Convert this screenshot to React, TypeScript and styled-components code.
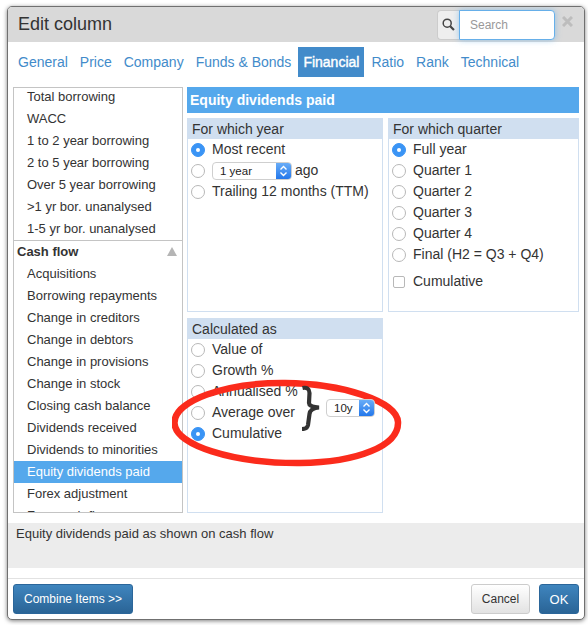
import React from 'react';
import styled, {createGlobalStyle} from 'styled-components';

const GlobalStyle = createGlobalStyle`
html, body {
    margin: 0;
    padding: 0;
    background: #ffffff;
}
body {
    font-family: "Liberation Sans", Arial, sans-serif;
    color: #333333;
}
* {
    box-sizing: border-box;
}
`;

const Page = styled.div`
width: 588px;
height: 625px;
padding: 6px 0 0 7px;
overflow: hidden;
background: #ffffff;
`;

const Modal = styled.div`
display: flex;
flex-direction: column;
width: 578px;
height: 614px;
background: #ffffff;
border: 1px solid #707070;
border-radius: 5px;
box-shadow: 0 1px 4px rgba(0, 0, 0, 0.5);
overflow: hidden;
`;

const TitleBar = styled.div`
display: flex;
align-items: center;
height: 35px;
flex: none;
padding-left: 10px;
background: #d9d9d9;
`;

const Title = styled.div`
flex: 1;
font-size: 18px;
color: #333333;
`;

const SearchAddon = styled.div`
display: flex;
align-items: center;
justify-content: center;
width: 22px;
height: 30px;
background: #eeeeee;
border: 1px solid #cccccc;
border-right: none;
border-radius: 4px 0 0 4px;
`;

const SearchInput = styled.div`
display: flex;
align-items: center;
width: 96px;
height: 30px;
padding-left: 10px;
font-size: 12px;
color: #999999;
background: #ffffff;
border: 1px solid #66afe9;
border-radius: 0 4px 4px 0;
box-shadow: 0 0 6px rgba(102, 175, 233, 0.6);
`;

const CloseIcon = styled.div`
display: flex;
width: 29px;
padding-left: 7px;
margin-top: -7px;
`;

const Tabs = styled.div`
display: flex;
align-items: center;
height: 30px;
flex: none;
margin-top: 5px;
padding-left: 5px;
`;

const Tab = styled.div<{ $active?: boolean }>`
display: flex;
align-items: center;
height: 30px;
padding: 0 5px;
margin-right: 2px;
font-size: 14px;
color: ${p => (p.$active ? '#ffffff' : '#428bca')};
-webkit-text-stroke: ${p => (p.$active ? '0.4px #ffffff' : '0')};
background: ${p => (p.$active ? '#428bca' : 'transparent')};
`;

const Body = styled.div`
display: flex;
flex: none;
gap: 4px;
height: 426px;
margin-top: 10px;
padding-left: 5px;
`;

const ListBox = styled.div`
display: flex;
flex-direction: column;
width: 170px;
height: 426px;
flex: none;
overflow: hidden;
border: 1px solid #c4c4c4;
`;

const ListItem = styled.div<{ $selected?: boolean }>`
flex: none;
height: 22px;
line-height: 22px;
padding-left: 13px;
font-size: 13px;
white-space: nowrap;
color: ${p => (p.$selected ? '#ffffff' : '#333333')};
background: ${p => (p.$selected ? '#55a8ec' : 'transparent')};

&:first-child {
    margin-top: -2px;
}
`;

const ListSection = styled.div`
display: flex;
align-items: center;
justify-content: space-between;
flex: none;
height: 23px;
padding: 0 5px 2px 3px;
font-size: 13px;
font-weight: bold;
border-top: 1px solid #c4c4c4;
`;

const SectionArrow = styled.div`
width: 0;
height: 0;
border-left: 5px solid transparent;
border-right: 5px solid transparent;
border-bottom: 9px solid #b5b5b5;
`;

const Detail = styled.div`
display: flex;
flex-direction: column;
width: 392px;
flex: none;
`;

const DetailHeader = styled.div`
display: flex;
align-items: center;
height: 26px;
flex: none;
padding-left: 3px;
font-size: 14px;
font-weight: bold;
color: #ffffff;
background: #55a8ec;
`;

const Groups = styled.div`
display: grid;
grid-template-columns: 196px 191px;
grid-template-rows: 194px 195px;
column-gap: 5px;
row-gap: 6px;
margin-top: 5px;
`;

const Group = styled.div`
position: relative;
border: 1px solid #d0dff0;
border-top: none;
`;

const GroupTitle = styled.div`
display: flex;
align-items: center;
height: 21px;
margin: 0 -1px;
padding-left: 5px;
font-size: 14px;
color: #333333;
background: #d0dff0;
`;

const RadioList = styled.div`
display: flex;
flex-direction: column;
padding-left: 3px;
`;

const Row = styled.div`
display: flex;
align-items: center;
height: 21px;
gap: 7px;
font-size: 14px;
white-space: nowrap;
`;

const Label = styled.span`
padding-bottom: 2px;
`;

const Radio = styled.div<{ $on?: boolean }>`
display: flex;
align-items: center;
justify-content: center;
width: 14px;
height: 14px;
flex: none;
border-radius: 50%;
border: 1.5px solid ${p => (p.$on ? '#3a94f5' : '#b8b8b8')};
background: ${p => (p.$on ? '#3a94f5' : '#ffffff')};

&::after {
    content: '';
    display: ${p => (p.$on ? 'block' : 'none')};
    width: 4px;
    height: 4px;
    border-radius: 50%;
    background: #ffffff;
}
`;

const Checkbox = styled.div`
width: 12px;
height: 12px;
flex: none;
margin: 0 1px;
border: 1.5px solid #b8b8b8;
border-radius: 2px;
background: #ffffff;
`;

const CheckRow = styled(Row)`
margin-top: 6px;
`;

const SelectBox = styled.div<{ $w: number }>`
display: flex;
align-items: center;
justify-content: space-between;
width: ${p => p.$w}px;
height: 18px;
flex: none;
padding-left: 7px;
overflow: hidden;
font-size: 11.5px;
color: #222222;
background: #ffffff;
border: 1px solid #cfcfcf;
border-radius: 4px;
`;

const YearSelect = styled(SelectBox)`
margin-right: -4px;
`;

const SelectStepper = styled.div`
display: flex;
align-items: center;
justify-content: center;
width: 15px;
height: 18px;
flex: none;
background: linear-gradient(#6db0f8, #1f74ea);
`;

const CalcBody = styled.div`
display: flex;
`;

const CalcChoices = styled(RadioList)`
width: 114px;
flex: none;
`;

const CalcRange = styled.div`
position: relative;
z-index: 1;
display: flex;
align-items: center;
gap: 4px;
height: 46px;
margin-top: 46px;
`;

const Annotation = styled.svg`
position: absolute;
left: -16px;
top: 61px;
pointer-events: none;
`;

const Brace = styled.svg`
flex: none;
`;

const Description = styled.div`
height: 45px;
flex: none;
margin-top: 10px;
padding: 3px 0 0 8px;
font-size: 13px;
background: #ececec;
`;

const Footer = styled.div`
display: flex;
align-items: center;
justify-content: space-between;
height: 41px;
flex: none;
margin-top: 10px;
padding: 5px;
border-top: 1px solid #e2e2e2;
`;

const FooterRight = styled.div`
display: flex;
gap: 9px;
`;

const PrimaryButton = styled.div<{ $w: number }>`
display: flex;
align-items: center;
justify-content: center;
width: ${p => p.$w}px;
height: 30px;
font-size: ${p => (p.$w > 100 ? 12 : 13)}px;
color: #ffffff;
background: linear-gradient(#3f85be, #2a6496);
border: 1px solid #2b669a;
border-radius: 3px;
`;

const CancelButton = styled.div`
display: flex;
align-items: center;
justify-content: center;
width: 59px;
height: 30px;
font-size: 12px;
color: #333333;
background: linear-gradient(#ffffff, #e2e2e2);
border: 1px solid #cccccc;
border-radius: 3px;
`;

const Stepper = () => (
    <SelectStepper>
        <svg width="9" height="12" viewBox="0 0 9 12" fill="none" stroke="#ffffff" strokeWidth="1.4">
            <path d="M1.5 4.5 4.5 1.5 7.5 4.5"/>
            <path d="M1.5 7.5 4.5 10.5 7.5 7.5"/>
        </svg>
    </SelectStepper>
);

const upperItems = [
    'Total borrowing',
    'WACC',
    '1 to 2 year borrowing',
    '2 to 5 year borrowing',
    'Over 5 year borrowing',
    '>1 yr bor. unanalysed',
    '1-5 yr bor. unanalysed',
];

const cashItems = [
    'Acquisitions',
    'Borrowing repayments',
    'Change in creditors',
    'Change in debtors',
    'Change in provisions',
    'Change in stock',
    'Closing cash balance',
    'Dividends received',
    'Dividends to minorities',
    'Equity dividends paid',
    'Forex adjustment',
    'Free cash flow',
];

const tabs = ['General', 'Price', 'Company', 'Funds & Bonds', 'Financial', 'Ratio', 'Rank', 'Technical'];
const quarters = ['Quarter 1', 'Quarter 2', 'Quarter 3', 'Quarter 4', 'Final (H2 = Q3 + Q4)'];

const App = () => {
    return (
        <Page>
            <GlobalStyle/>
            <Modal>
                <TitleBar>
                    <Title>Edit column</Title>
                    <SearchAddon>
                        <svg width="13" height="13" viewBox="0 0 13 13" fill="none" stroke="#444444" strokeWidth="1.5">
                            <circle cx="5.2" cy="5.2" r="4"/>
                            <path d="M8.2 8.2 12 12" strokeWidth="2.2"/>
                        </svg>
                    </SearchAddon>
                    <SearchInput>Search</SearchInput>
                    <CloseIcon>
                        <svg width="11" height="11" viewBox="0 0 11 11" stroke="#bdbdbd" strokeWidth="3">
                            <path d="M1 1 10 10M10 1 1 10"/>
                        </svg>
                    </CloseIcon>
                </TitleBar>
                <Tabs>
                    {tabs.map(t => <Tab key={t} $active={t === 'Financial'}>{t}</Tab>)}
                </Tabs>
                <Body>
                    <ListBox>
                        {upperItems.map(i => <ListItem key={i}>{i}</ListItem>)}
                        <ListSection>
                            Cash flow
                            <SectionArrow/>
                        </ListSection>
                        {cashItems.map(i => (
                            <ListItem key={i} $selected={i === 'Equity dividends paid'}>{i}</ListItem>
                        ))}
                    </ListBox>
                    <Detail>
                        <DetailHeader>Equity dividends paid</DetailHeader>
                        <Groups>
                            <Group>
                                <GroupTitle>For which year</GroupTitle>
                                <RadioList>
                                    <Row><Radio $on/><Label>Most recent</Label></Row>
                                    <Row>
                                        <Radio/>
                                        <YearSelect $w={80}>1 year<Stepper/></YearSelect>
                                        <Label>ago</Label>
                                    </Row>
                                    <Row><Radio/><Label>Trailing 12 months (TTM)</Label></Row>
                                </RadioList>
                            </Group>
                            <Group>
                                <GroupTitle>For which quarter</GroupTitle>
                                <RadioList>
                                    <Row><Radio $on/><Label>Full year</Label></Row>
                                    {quarters.map(q => <Row key={q}><Radio/><Label>{q}</Label></Row>)}
                                    <CheckRow><Checkbox/><Label>Cumulative</Label></CheckRow>
                                </RadioList>
                            </Group>
                            <Group>
                                <GroupTitle>Calculated as</GroupTitle>
                                <CalcBody>
                                    <CalcChoices>
                                        <Row><Radio/><Label>Value of</Label></Row>
                                        <Row><Radio/><Label>Growth %</Label></Row>
                                        <Row><Radio/><Label>Annualised %</Label></Row>
                                        <Row><Radio/><Label>Average over</Label></Row>
                                        <Row><Radio $on/><Label>Cumulative</Label></Row>
                                    </CalcChoices>
                                    <CalcRange>
                                        <Brace width="20" height="46" viewBox="0 0 20 46" fill="none">
                                            <path
                                                d="M0.5 3C5 2 7.5 4 7.5 8L7 18C7 21 11 22 17 22.5C11 23 8 25 7.5 29L6 40C5.5 43 3 44 0 44"
                                                stroke="#333333"
                                                strokeWidth="4.2"
                                            />
                                        </Brace>
                                        <SelectBox $w={49}>10y<Stepper/></SelectBox>
                                    </CalcRange>
                                </CalcBody>
                                <Annotation width="236" height="90" viewBox="0 0 236 90" fill="none">
                                    <path
                                        d="M113 4C53 3.5 2 22 2.5 44C3 66 60 84.5 128 84C185 83.5 227 67 226 43C225 22 170 4.5 113 4Z"
                                        stroke="#fb2b1c"
                                        strokeWidth="6.5"
                                    />
                                </Annotation>
                            </Group>
                        </Groups>
                    </Detail>
                </Body>
                <Description>Equity dividends paid as shown on cash flow</Description>
                <Footer>
                    <PrimaryButton $w={120}>Combine Items &gt;&gt;</PrimaryButton>
                    <FooterRight>
                        <CancelButton>Cancel</CancelButton>
                        <PrimaryButton $w={40}>OK</PrimaryButton>
                    </FooterRight>
                </Footer>
            </Modal>
        </Page>
    );
};

export default App;
